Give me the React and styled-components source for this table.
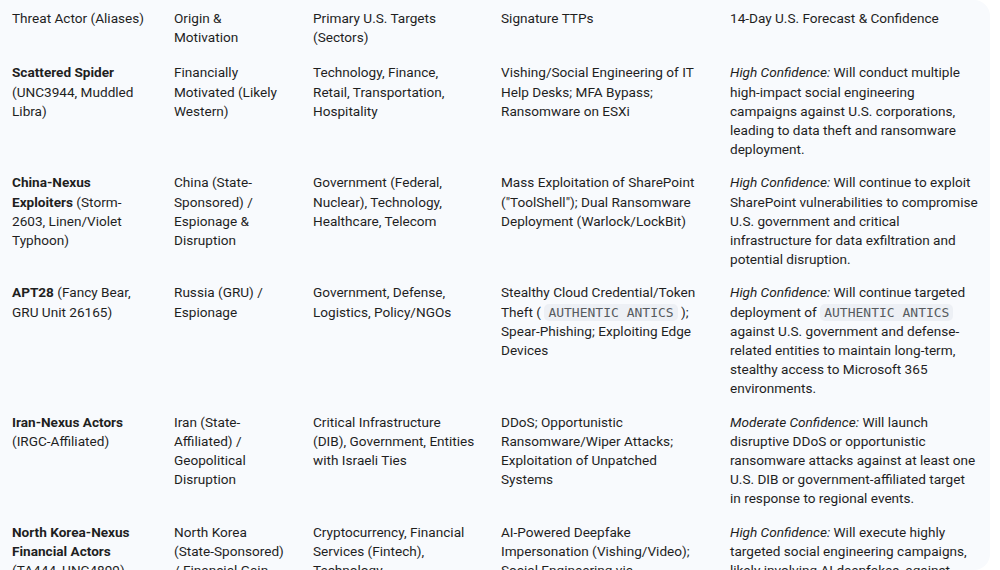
import React from "react";
import styled, { createGlobalStyle } from "styled-components";

const Global = createGlobalStyle`
  html, body { margin: 0; padding: 0; background: #ffffff; }
  body { overflow: hidden; height: 570px; }
`;

const Panel = styled.div`
  width: 990px;
  height: 570px;
  overflow: hidden;
  background: #f8fafd;
  border-radius: 0 16px 16px 0;
  font-family: Roboto, "Noto Sans", sans-serif;
  font-size: 13.6px;
  line-height: 19.2px;
  color: #1f1f1f;
`;

const Table = styled.table`
  border-collapse: collapse;
  table-layout: fixed;
  width: 990px;
`;

const Col = styled.col`
  width: ${(p) => p.$w}px;
`;

const HeadCell = styled.th`
  text-align: left;
  font-weight: 400;
  vertical-align: top;
  padding: 8.5px 12px 9.5px 12px;
`;

const Cell = styled.td`
  vertical-align: top;
  padding: 7px 12px 7px 12px;
`;

const Name = styled.strong`
  font-weight: 700;
`;

const Conf = styled.em`
  font-style: italic;
`;

const Code = styled.code`
  font-family: "DejaVu Sans Mono", "Liberation Mono", monospace;
  font-size: 13px;
  color: #575b5f;
  background: #edf0f5;
  border-radius: 5px;
  padding: 1px 4px;
`;

const rows = [
  {
    actor: (<><Name>Scattered Spider</Name> (UNC3944, Muddled Libra)</>),
    origin: "Financially Motivated (Likely Western)",
    targets: "Technology, Finance, Retail, Transportation, Hospitality",
    ttps: "Vishing/Social Engineering of IT Help Desks; MFA Bypass; Ransomware on ESXi",
    forecast: (<><Conf>High Confidence:</Conf> Will conduct multiple high-impact social engineering campaigns against U.S. corporations, leading to data theft and ransomware deployment.</>),
  },
  {
    actor: (<><Name>China-Nexus Exploiters</Name> (Storm-2603, Linen/Violet Typhoon)</>),
    origin: "China (State-Sponsored) / Espionage & Disruption",
    targets: "Government (Federal, Nuclear), Technology, Healthcare, Telecom",
    ttps: "Mass Exploitation of SharePoint (\"ToolShell\"); Dual Ransomware Deployment (Warlock/LockBit)",
    forecast: (<><Conf>High Confidence:</Conf> Will continue to exploit SharePoint vulnerabilities to compromise U.S. government and critical infrastructure for data exfiltration and potential disruption.</>),
  },
  {
    actor: (<><Name>APT28</Name> (Fancy Bear, GRU Unit 26165)</>),
    origin: "Russia (GRU) / Espionage",
    targets: "Government, Defense, Logistics, Policy/NGOs",
    ttps: (<>Stealthy Cloud Credential/Token Theft ( <Code>AUTHENTIC ANTICS</Code> ); Spear-Phishing; Exploiting Edge Devices</>),
    forecast: (<><Conf>High Confidence:</Conf> Will continue targeted deployment of <Code>AUTHENTIC ANTICS</Code> against U.S. government and defense-related entities to maintain long-term, stealthy access to Microsoft 365 environments.</>),
  },
  {
    actor: (<><Name>Iran-Nexus Actors</Name> (IRGC-Affiliated)</>),
    origin: "Iran (State-Affiliated) / Geopolitical Disruption",
    targets: "Critical Infrastructure (DIB), Government, Entities with Israeli Ties",
    ttps: "DDoS; Opportunistic Ransomware/Wiper Attacks; Exploitation of Unpatched Systems",
    forecast: (<><Conf>Moderate Confidence:</Conf> Will launch disruptive DDoS or opportunistic ransomware attacks against at least one U.S. DIB or government-affiliated target in response to regional events.</>),
  },
  {
    actor: (<><Name>North Korea-Nexus Financial Actors</Name> (TA444, UNC4899)</>),
    origin: "North Korea (State-Sponsored) / Financial Gain",
    targets: "Cryptocurrency, Financial Services (Fintech), Technology",
    ttps: "AI-Powered Deepfake Impersonation (Vishing/Video); Social Engineering via LinkedIn/Telegram",
    forecast: (<><Conf>High Confidence:</Conf> Will execute highly targeted social engineering campaigns, likely involving AI deepfakes, against cryptocurrency and fintech firms.</>),
  },
];

export default function App() {
  return (
    <>
      <Global />
      <Panel>
        <Table>
          <colgroup>
            <Col $w={162} />
            <Col $w={139} />
            <Col $w={188} />
            <Col $w={229} />
            <Col $w={272} />
          </colgroup>
          <thead>
            <tr>
              <HeadCell>Threat Actor (Aliases)</HeadCell>
              <HeadCell>Origin &amp; Motivation</HeadCell>
              <HeadCell>Primary U.S. Targets (Sectors)</HeadCell>
              <HeadCell>Signature TTPs</HeadCell>
              <HeadCell>14-Day U.S. Forecast &amp; Confidence</HeadCell>
            </tr>
          </thead>
          <tbody>
            {rows.map((r, i) => (
              <tr key={i}>
                <Cell>{r.actor}</Cell>
                <Cell>{r.origin}</Cell>
                <Cell>{r.targets}</Cell>
                <Cell>{r.ttps}</Cell>
                <Cell>{r.forecast}</Cell>
              </tr>
            ))}
          </tbody>
        </Table>
      </Panel>
    </>
  );
}
